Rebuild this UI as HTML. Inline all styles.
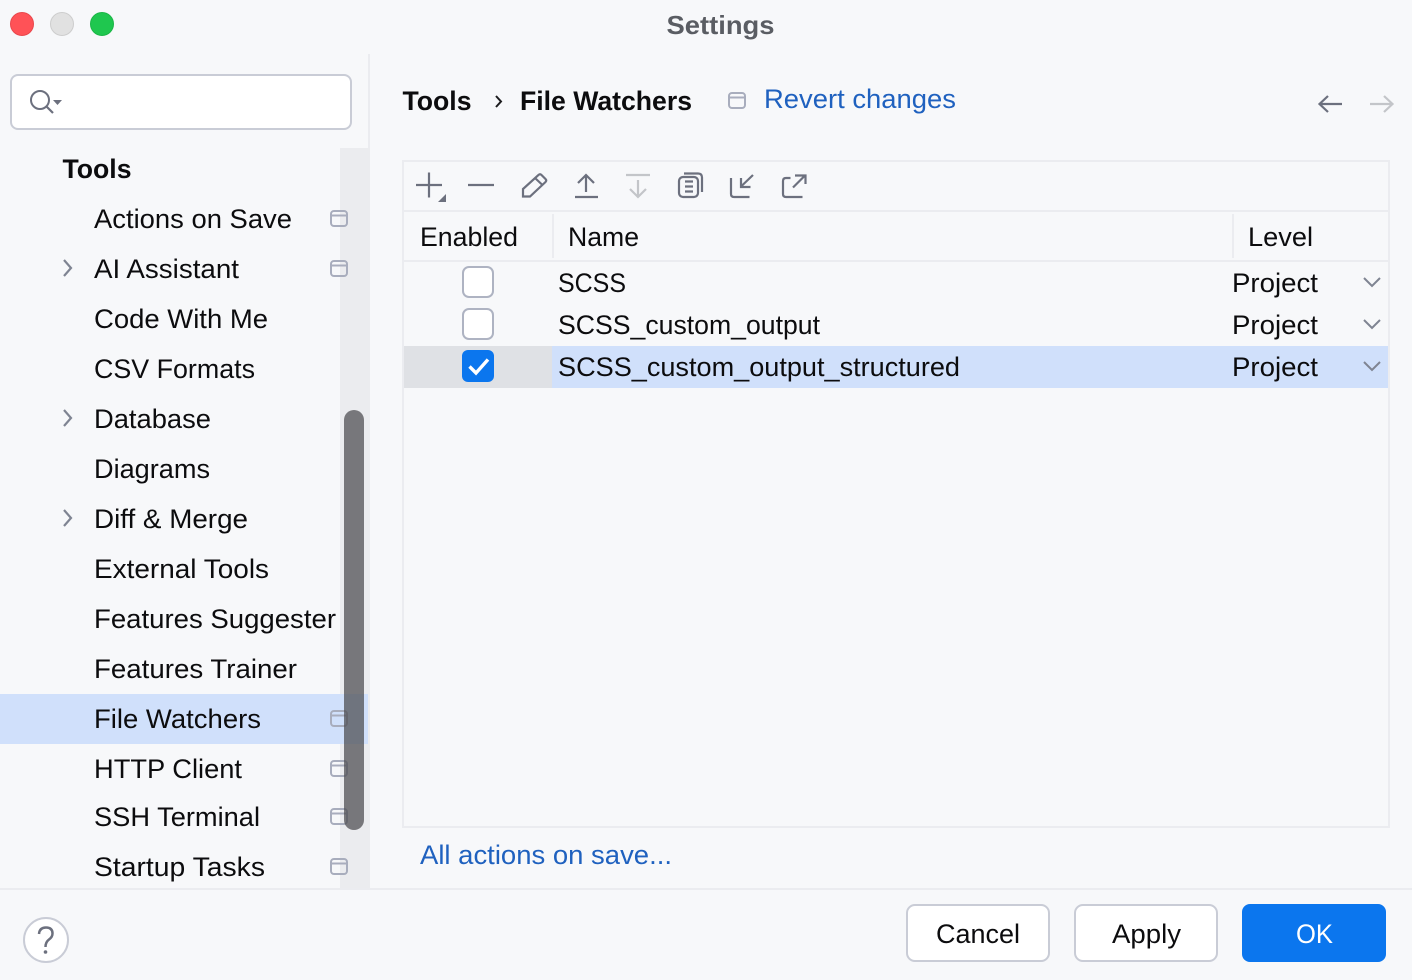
<!DOCTYPE html>
<html>
<head>
<meta charset="utf-8">
<title>Settings</title>
<style>
html,body{margin:0;padding:0;background:#f7f8fa;width:1412px;height:980px;overflow:hidden}
svg{display:block}
text{font-family:"Liberation Sans",sans-serif;font-size:27px;fill:#0c0c0e}
.b{font-weight:bold}
.l{fill:#1f61bf}
.i{fill:none;stroke:#6c707e;stroke-width:2.2}
.d{fill:none;stroke:#c3c5c9;stroke-width:2.2}
.w{fill:none;stroke:#a8adbd;stroke-width:2}
</style>
</head>
<body>
<svg width="1412" height="980" viewBox="0 0 1412 980" xmlns="http://www.w3.org/2000/svg">
<defs>
<g id="w"><rect x="1" y="1" width="16" height="15" rx="3" class="w"/><path d="M1 5.500H17" class="w"/></g>
<path id="ch" d="M0 0L8 8L16 0" fill="none" stroke="#7f8492" stroke-width="2"/>
<path id="ar" d="M0 0L7 8L0 16" fill="none" stroke="#7f8492" stroke-width="2.200"/>
</defs>
<rect width="1412" height="980" fill="#f7f8fa"/>

<!-- title bar -->
<circle cx="22" cy="24" r="11.500" fill="#ff5257" stroke="#e9474c"/>
<circle cx="62" cy="24" r="11.500" fill="#e1e1e1" stroke="#cdcdcd"/>
<circle cx="102" cy="24" r="11.500" fill="#1fc74f" stroke="#1bb646"/>
<text x="666.500" y="34" class="b" style="font-size:26px;fill:#5a5d63" textLength="108" lengthAdjust="spacingAndGlyphs">Settings</text>

<!-- sidebar -->
<rect x="368" y="54" width="2" height="834" fill="#ebecf0"/>
<rect x="340" y="148" width="30" height="740" fill="#ebecef"/>
<rect x="0" y="694" width="368" height="50" fill="#d0e0fb"/>
<rect x="11" y="75" width="340" height="54" rx="7" fill="#fff" stroke="#c9ccd6" stroke-width="2"/>
<circle cx="40" cy="100" r="9" fill="none" stroke="#6c707e" stroke-width="2"/>
<path d="M46.500 106.500L53 113" stroke="#6c707e" stroke-width="2.200" fill="none"/>
<path d="M53 100H62L57.500 105Z" fill="#6c707e"/>

<text x="62.500" y="178" class="b" textLength="69" lengthAdjust="spacingAndGlyphs">Tools</text>
<text x="94" y="228" textLength="198" lengthAdjust="spacingAndGlyphs">Actions on Save</text>
<text x="94" y="278" textLength="145" lengthAdjust="spacingAndGlyphs">AI Assistant</text>
<text x="94" y="328" textLength="174" lengthAdjust="spacingAndGlyphs">Code With Me</text>
<text x="94" y="378" textLength="161" lengthAdjust="spacingAndGlyphs">CSV Formats</text>
<text x="94" y="428" textLength="117" lengthAdjust="spacingAndGlyphs">Database</text>
<text x="94" y="478" textLength="116" lengthAdjust="spacingAndGlyphs">Diagrams</text>
<text x="94" y="528" textLength="154" lengthAdjust="spacingAndGlyphs">Diff &amp; Merge</text>
<text x="94" y="578" textLength="175" lengthAdjust="spacingAndGlyphs">External Tools</text>
<text x="94" y="628" textLength="242" lengthAdjust="spacingAndGlyphs">Features Suggester</text>
<text x="94" y="678" textLength="203" lengthAdjust="spacingAndGlyphs">Features Trainer</text>
<text x="94" y="728" textLength="167" lengthAdjust="spacingAndGlyphs">File Watchers</text>
<text x="94" y="778" textLength="148" lengthAdjust="spacingAndGlyphs">HTTP Client</text>
<text x="94" y="826" textLength="166" lengthAdjust="spacingAndGlyphs">SSH Terminal</text>
<text x="94" y="876" textLength="171" lengthAdjust="spacingAndGlyphs">Startup Tasks</text>

<use href="#ar" x="64" y="260"/>
<use href="#ar" x="64" y="410"/>
<use href="#ar" x="64" y="510"/>

<use href="#w" x="330" y="210"/>
<use href="#w" x="330" y="260"/>
<use href="#w" x="330" y="710"/>
<use href="#w" x="330" y="760"/>
<use href="#w" x="330" y="808"/>
<use href="#w" x="330" y="858"/>

<rect x="344" y="410" width="20" height="420" rx="10" fill="#4a4a4d" fill-opacity="0.72"/>

<!-- header -->
<text x="402.500" y="110" class="b" textLength="69" lengthAdjust="spacingAndGlyphs">Tools</text>
<path d="M496 96L501 101.500L496 107" fill="none" stroke="#1c1c1e" stroke-width="2"/>
<text x="520" y="110" class="b" textLength="172" lengthAdjust="spacingAndGlyphs">File Watchers</text>
<use href="#w" x="728" y="92"/>
<text x="764" y="108" class="l" textLength="192" lengthAdjust="spacingAndGlyphs">Revert changes</text>
<path d="M1342 104H1320M1328 96L1319.500 104L1328 112" class="i"/>
<path d="M1370 104H1392M1384 96L1392.500 104L1384 112" class="d"/>

<!-- table frame -->
<rect x="403" y="161" width="986" height="666" fill="none" stroke="#ebecf0" stroke-width="2"/>
<rect x="404" y="210" width="984" height="2" fill="#ebecf0"/>
<rect x="404" y="260" width="984" height="2" fill="#ebecf0"/>
<rect x="552" y="214" width="2" height="44" fill="#ebecf0"/>
<rect x="1232" y="214" width="2" height="44" fill="#ebecf0"/>

<!-- toolbar icons -->
<path d="M416 185H442M429 172.500V197.500" class="i"/>
<path d="M438 202L446 194V202Z" fill="#6c707e"/>
<path d="M468 185H494" class="i"/>
<path d="M523 196.500V189L538.500 175Q540 173.500 541.500 175L545.500 179Q547 180.500 545.500 182L530 196.500H523ZM535 178L543 185.500" class="i"/>
<path d="M575 197H598M586 192V175.500M578 183L586 175L594 183" class="i"/>
<path d="M626 175H650M638 180V196.500M630 189L638 197L646 189" class="d"/>
<rect x="679" y="177" width="19" height="20" rx="4" class="i"/>
<path d="M685 181.500H693M685 186.500H693M685 191.500H693" class="i"/>
<path d="M684 173.500H698Q702 173.500 702 177.500V192" class="i"/>
<path d="M731 178V194Q731 197 734 197H749.500M753 175L741 186.500M741 178V187H750.500" class="i"/>
<path d="M790.500 178H786Q783 178 783 181V194Q783 197 786 197H802.500M793 187.500L805 175.500M795 175.500H805.500V184" class="i"/>

<!-- table headers -->
<text x="420" y="246" textLength="98" lengthAdjust="spacingAndGlyphs">Enabled</text>
<text x="568" y="246" textLength="71" lengthAdjust="spacingAndGlyphs">Name</text>
<text x="1248" y="246" textLength="65" lengthAdjust="spacingAndGlyphs">Level</text>

<!-- rows -->
<rect x="404" y="346" width="148" height="42" fill="#dfe1e5"/>
<rect x="552" y="346" width="836" height="42" fill="#d0e0fb"/>

<rect x="463" y="267" width="30" height="30" rx="6" fill="#fff" stroke="#aeb3c2" stroke-width="2"/>
<rect x="463" y="309" width="30" height="30" rx="6" fill="#fff" stroke="#aeb3c2" stroke-width="2"/>
<rect x="462" y="350" width="32" height="32" rx="6" fill="#0b76ee"/>
<path d="M469.500 366.500L476 373L488 359.500" fill="none" stroke="#fff" stroke-width="3.400"/>

<text x="558" y="292" textLength="68" lengthAdjust="spacingAndGlyphs">SCSS</text>
<text x="558" y="334" textLength="262" lengthAdjust="spacingAndGlyphs">SCSS_custom_output</text>
<text x="558" y="376" textLength="402" lengthAdjust="spacingAndGlyphs">SCSS_custom_output_structured</text>
<text x="1232" y="292" textLength="86" lengthAdjust="spacingAndGlyphs">Project</text>
<text x="1232" y="334" textLength="86" lengthAdjust="spacingAndGlyphs">Project</text>
<text x="1232" y="376" textLength="86" lengthAdjust="spacingAndGlyphs">Project</text>
<use href="#ch" x="1364" y="278"/>
<use href="#ch" x="1364" y="320"/>
<use href="#ch" x="1364" y="362"/>

<text x="420" y="864" class="l" textLength="252" lengthAdjust="spacingAndGlyphs">All actions on save...</text>

<!-- footer -->
<rect x="0" y="888" width="1412" height="2" fill="#ebecf0"/>
<circle cx="46" cy="940" r="22" fill="#fff" stroke="#c9ccd6" stroke-width="2"/>
<path d="M39 934Q39.500 927.500 46 927.500Q52.500 927.500 52.500 933.500Q52.500 937 49 939.500Q45.500 942 45.500 947" fill="none" stroke="#6c707e" stroke-width="2.500"/>
<circle cx="45.500" cy="952" r="1.800" fill="#6c707e"/>

<rect x="907" y="905" width="142" height="56" rx="8" fill="#fff" stroke="#c9ccd6" stroke-width="2"/>
<text x="936" y="943" textLength="84" lengthAdjust="spacingAndGlyphs">Cancel</text>
<rect x="1075" y="905" width="142" height="56" rx="8" fill="#fff" stroke="#c9ccd6" stroke-width="2"/>
<text x="1112" y="943" textLength="69" lengthAdjust="spacingAndGlyphs">Apply</text>
<rect x="1242" y="904" width="144" height="58" rx="8" fill="#0b76ee"/>
<text x="1296" y="943" style="fill:#fff" textLength="37" lengthAdjust="spacingAndGlyphs">OK</text>
</svg>
</body>
</html>
